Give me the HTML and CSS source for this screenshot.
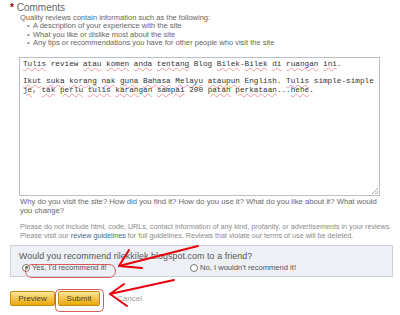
FILE: index.html
```html
<!DOCTYPE html>
<html lang="en">
<head>
    <meta charset="UTF-8">
    <title>Write a Review</title>
    <link rel="stylesheet" href="styles.css">
</head>
<body>
    <div class="review">
        <div class="field-label"><span class="req">*</span> Comments</div>
        <div class="hint">
            <p>Quality reviews contain information such as the following:</p>
            <ul>
                <li>A description of your experience with the site</li>
                <li>What you like or dislike most about the site</li>
                <li>Any tips or recommendations you have for other people who visit the site</li>
            </ul>
        </div>
        <div class="textbox">
            <p><span class="sp">Tulis</span> review <span class="sp">atau</span> <span class="sp">komen</span> <span class="sp">anda</span> <span class="sp">tentang</span> Blog <span class="sp">Bilek</span>-<span class="sp">Bilek</span> <span class="sp">di</span> <span class="sp">ruangan</span> <span class="sp">ini</span>.</p>
            <p><span class="sp">Ikut</span> <span class="sp">suka</span> <span class="sp">korang</span> <span class="sp">nak</span> <span class="sp">guna</span> <span class="sp">Bahasa</span> <span class="sp">Melayu</span> <span class="sp">ataupun</span> English. <span class="sp">Tulis</span> simple-simple<br><span class="sp">je</span>, <span class="sp">tak</span> <span class="sp">perlu</span> <span class="sp">tulis</span> <span class="sp">karangan</span> <span class="sp">sampai</span> 200 <span class="sp">patah</span> <span class="sp">perkataan</span>...<span class="sp">hehe</span>.</p>
            <span class="grip"></span>
        </div>
        <p class="questions">Why do you visit the site? How did you find it? How do you use it? What do you like about it? What would you change?</p>
        <p class="policy">Please do not include html, code, URLs, contact information of any kind, profanity, or advertisements in your reviews.<br>Please visit our <a href="#">review guidelines</a> for full guidelines. Reviews that violate our terms of use will be deleted.</p>
        <div class="recommend">
            <div class="rec-q">Would you recommend rilekkilek.blogspot.com to a friend?</div>
            <div class="rec-opts">
                <label class="opt yes"><span class="radio on"></span>Yes, I'd recommend it!</label>
                <label class="opt"><span class="radio"></span>No, I wouldn't recommend it!</label>
            </div>
        </div>
        <div class="actions">
            <button class="btn">Preview</button>
            <button class="btn submit">Submit</button>
            <a class="cancel" href="#">Cancel</a>
        </div>

        <!-- hand drawn marks on top of the form -->
        <svg class="marks" width="400" height="315" viewBox="0 0 400 315">
            <g fill="none" stroke="#e8000b" stroke-width="2" stroke-linecap="round" stroke-linejoin="round">
                <path d="M198 246 L119 266"/>
                <path d="M129 250 L119 266 L142 268"/>
                <path d="M174 280 L110 294"/>
                <path d="M124 284 L110 294 L127 306"/>
            </g>
            <g fill="none" stroke="#d85a5a" stroke-width="1">
                <rect x="25.5" y="264.5" width="90" height="13" rx="6.5"/>
                <rect x="55.5" y="289.5" width="48" height="22" rx="4"/>
            </g>
        </svg>
    </div>
</body>
</html>
```

FILE: styles.css
```css
body {
    margin: 0;
    background: #fff;
    font-family: "Liberation Sans", Arial, sans-serif;
    color: #666;
}
.review {
    position: relative;
    width: 400px;
    height: 315px;
    padding-top: 2px;
    box-sizing: border-box;
}
.field-label {
    padding-left: 10px;
    font-size: 10px;
    line-height: 11px;
    color: #666;
}
.req {
    color: #a00;
    font-weight: bold;
}
.hint {
    padding-left: 20px;
    font-size: 7.5px;
    line-height: 8.4px;
    color: #666;
}
.hint p {
    margin: 1px 0 0;
}
.hint ul {
    margin: 0;
    padding-left: 13px;
    list-style: none;
}
.hint li::before {
    content: "\2022";
    color: #888;
    margin-left: -6px;
    width: 6px;
    display: inline-block;
}
.textbox {
    position: relative;
    margin: 9.5px 0 0 19px;
    width: 361px;
    height: 139px;
    box-sizing: border-box;
    border: 1px solid #b9c0c6;
    padding: 2px 0 0 3px;
    font-family: "Liberation Mono", "Courier New", monospace;
    font-size: 7.7px;
    line-height: 8.6px;
    color: #333;
}
.textbox p {
    margin: 0 0 8.6px;
}
.sp {
    text-decoration: underline wavy rgba(230, 80, 80, 0.55);
    text-decoration-thickness: 0.6px;
    text-underline-offset: 1px;
}
.grip {
    position: absolute;
    right: 1px;
    bottom: 1px;
    width: 6px;
    height: 6px;
    background: linear-gradient(135deg, transparent 45%, #aaa 45%, #aaa 55%, transparent 55%, transparent 75%, #aaa 75%, #aaa 85%, transparent 85%);
}
.questions {
    margin: 1px 0 0 20px;
    width: 370px;
    font-size: 7.7px;
    line-height: 9px;
    color: #666;
}
.policy {
    margin: 7px 0 0 20px;
    font-size: 7.2px;
    line-height: 9px;
    color: #8a8a8a;
}
.policy a {
    color: #3a6b8a;
    text-decoration: none;
}
.recommend {
    margin: 5px 0 0 10px;
    width: 383px;
    height: 32px;
    box-sizing: border-box;
    background: #edf0f4;
    border: 1px solid #cdd1d6;
    padding: 5px 0 0 8px;
}
.rec-q {
    font-size: 8.8px;
    line-height: 11px;
    color: #555;
    letter-spacing: 0.1px;
}
.rec-opts {
    display: flex;
    font-size: 7.6px;
    line-height: 11px;
    color: #555;
    padding-left: 3px;
}
.opt {
    display: flex;
    align-items: center;
    gap: 2px;
}
.opt.yes {
    width: 168px;
}
.radio {
    width: 6px;
    height: 6px;
    border: 1px solid #777;
    border-radius: 50%;
    background: #fff;
    position: relative;
}
.radio.on::after {
    content: "";
    position: absolute;
    left: 1.5px;
    top: 1.5px;
    width: 3px;
    height: 3px;
    border-radius: 50%;
    background: #2a8a3a;
}
.actions {
    display: flex;
    align-items: center;
    gap: 3px;
    margin: 14px 0 0 10px;
}
.btn {
    height: 15px;
    padding: 0 7px;
    font-family: "Liberation Sans", Arial, sans-serif;
    font-size: 8px;
    color: #444;
    border: 1px solid #c38a10;
    border-radius: 2px;
    background: linear-gradient(#fde7a0, #f4c23c 55%, #e9a90c);
}
.btn:first-child {
    width: 45px;
}
.submit {
    width: 42px;
}
.cancel {
    margin-left: 14px;
    font-size: 8px;
    color: #999;
    text-decoration: none;
}
.marks {
    position: absolute;
    left: 0;
    top: 0;
    pointer-events: none;
}
```
